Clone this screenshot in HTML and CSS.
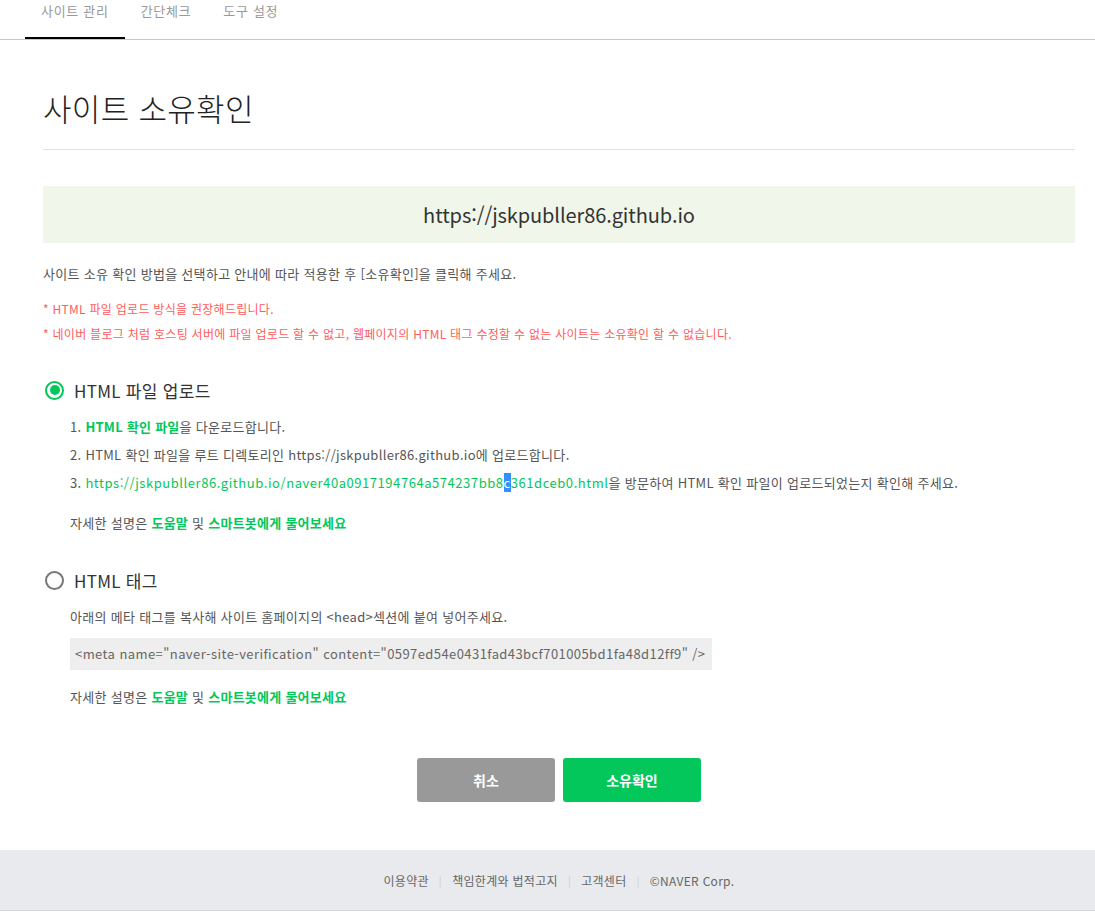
FILE: index.html
```html
<!DOCTYPE html>
<html lang="ko">
<head>
    <meta charset="UTF-8">
    <meta name="viewport" content="width=device-width, initial-scale=1.0">
    <title>사이트 소유확인</title>
    <link rel="stylesheet" href="styles.css">
</head>
<body>
    <!-- Top tabs -->
    <nav class="tabs">
        <a class="tab active">사이트 관리</a>
        <a class="tab">간단체크</a>
        <a class="tab">도구 설정</a>
    </nav>

    <div class="content">
        <h1 class="page-title">사이트 소유확인</h1>

        <div class="site-box">https://jskpubller86.github.io</div>

        <p class="guide">사이트 소유 확인 방법을 선택하고 안내에 따라 적용한 후 [소유확인]을 클릭해 주세요.</p>

        <div class="notice">
            <p>* HTML 파일 업로드 방식을 권장해드립니다.</p>
            <p>* 네이버 블로그 처럼 호스팅 서버에 파일 업로드 할 수 없고, 웹페이지의 HTML 태그 수정할 수 없는 사이트는 소유확인 할 수 없습니다.</p>
        </div>

        <!-- Method 1: file upload -->
        <label class="method first">
            <span class="radio checked"></span>
            <span class="method-name">HTML 파일 업로드</span>
        </label>
        <div class="method-body">
            <ol class="steps">
                <li>1. <a class="link strong">HTML 확인 파일</a>을 다운로드합니다.</li>
                <li>2. HTML 확인 파일을 루트 디렉토리인 https://jskpubller86.github.io에 업로드합니다.</li>
                <li>3. <a class="link url">https://jskpubller86.github.io/naver40a0917194764a574237bb8<span class="sel">c</span>361dceb0.html</a>을 방문하여 HTML 확인 파일이 업로드되었는지 확인해 주세요.</li>
            </ol>
            <p class="help">자세한 설명은 <a class="link strong">도움말</a> 및 <a class="link strong">스마트봇에게 물어보세요</a></p>
        </div>

        <!-- Method 2: meta tag -->
        <label class="method second">
            <span class="radio"></span>
            <span class="method-name">HTML 태그</span>
        </label>
        <div class="method-body">
            <p class="tag-guide">아래의 메타 태그를 복사해 사이트 홈페이지의 &lt;head&gt;섹션에 붙여 넣어주세요.</p>
            <div class="code">&lt;meta name="naver-site-verification" content="0597ed54e0431fad43bcf701005bd1fa48d12ff9" /&gt;</div>
            <p class="help help-tag">자세한 설명은 <a class="link strong">도움말</a> 및 <a class="link strong">스마트봇에게 물어보세요</a></p>
        </div>

        <div class="buttons">
            <button class="btn cancel">취소</button>
            <button class="btn confirm">소유확인</button>
        </div>
    </div>

    <footer class="footer">
        <div class="footer-inner">
            <a>이용약관</a><span class="bar">|</span>
            <a>책임한계와 법적고지</a><span class="bar">|</span>
            <a>고객센터</a><span class="bar">|</span>
            <span>©NAVER Corp.</span>
        </div>
    </footer>
</body>
</html>
```

FILE: styles.css
```css
body {
    margin: 0;
    font-family: "Noto Sans CJK KR", "Noto Sans", sans-serif;
    color: #555555;
    background: #ffffff;
}

p {
    margin: 0;
}

a {
    text-decoration: none;
    color: inherit;
}

/* Tabs */
.tabs {
    display: flex;
    padding-left: 25px;
    border-bottom: 1px solid #c8c8c8;
}

.tab {
    padding: 0 16px 15px;
    font-size: 13px;
    line-height: 22px;
    color: #999999;
    letter-spacing: 0.7px;
    border-bottom: 2px solid transparent;
}

.tab.active {
    border-bottom-color: #000000;
}

/* Main content */
.content {
    margin: 0 20px 0 43px;
    font-size: 13px;
    letter-spacing: 0.3px;
}

.page-title {
    margin: 48px 0 0;
    padding-bottom: 21px;
    font-size: 31px;
    line-height: 40px;
    font-weight: 300;
    color: #222222;
    letter-spacing: 0.3px;
    border-bottom: 1px solid #e0e0e0;
}

.site-box {
    margin-top: 36px;
    height: 57px;
    display: flex;
    align-items: center;
    justify-content: center;
    background-color: #f0f6e9;
    font-size: 20px;
    color: #333333;
    letter-spacing: -0.1px;
}

.guide {
    margin-top: 21px;
    line-height: 20px;
}

.notice {
    margin-top: 12px;
    font-size: 12px;
    line-height: 25px;
    color: #ff5c5c;
    letter-spacing: 0.28px;
}

/* Methods */
.method {
    display: flex;
    align-items: center;
    height: 24px;
    padding-left: 2px;
}

.method.first {
    margin-top: 32px;
}

.method.second {
    margin-top: 35px;
}

.radio {
    box-sizing: border-box;
    width: 19px;
    height: 19px;
    border: 2px solid #777777;
    border-radius: 50%;
    display: flex;
    align-items: center;
    justify-content: center;
}

.radio.checked {
    border-color: #03c75a;
}

.radio.checked::after {
    content: "";
    width: 10px;
    height: 10px;
    border-radius: 50%;
    background-color: #03c75a;
}

.method-name {
    margin-left: 10px;
    font-size: 17px;
    color: #333333;
    letter-spacing: 0.3px;
}

.method-body {
    padding-left: 27px;
}

.steps {
    list-style: none;
    margin: 11px 0 0;
    padding: 0;
    line-height: 28px;
}

.link {
    color: #03c75a;
}

.link.strong {
    font-weight: bold;
    letter-spacing: 0.25px;
}

.link.url {
    letter-spacing: 0.55px;
}

.sel {
    background-color: #3390ff;
    color: #ffffff;
}

.help {
    margin-top: 16px;
    line-height: 20px;
}

.help-tag {
    margin-top: 17px;
}

.tag-guide {
    margin-top: 15px;
    line-height: 20px;
}

.code {
    display: inline-block;
    margin-top: 11px;
    padding: 0 6px 0 5px;
    height: 32px;
    line-height: 32px;
    background-color: #eeeeee;
    color: #666666;
    letter-spacing: 0.42px;
}

/* Buttons */
.buttons {
    margin-top: 51px;
    display: flex;
    justify-content: center;
    gap: 8px;
}

.btn {
    width: 138px;
    height: 44px;
    border: none;
    border-radius: 3px;
    font-family: inherit;
    font-size: 14px;
    font-weight: bold;
    color: #ffffff;
    cursor: pointer;
}

.btn.cancel {
    background-color: #999999;
}

.btn.confirm {
    background-color: #03c75a;
}

/* Footer */
.footer {
    margin-top: 48px;
    height: 60px;
    background-color: #e9eaed;
    border-bottom: 1px solid #d8d8d8;
}

.footer-inner {
    margin: 0 20px 0 43px;
    height: 60px;
    display: flex;
    align-items: center;
    justify-content: center;
    font-size: 12px;
    color: #666666;
    letter-spacing: 0.3px;
}

.footer .bar {
    margin: 0 10px;
    color: #d0d0d0;
    font-size: 11px;
}
```
